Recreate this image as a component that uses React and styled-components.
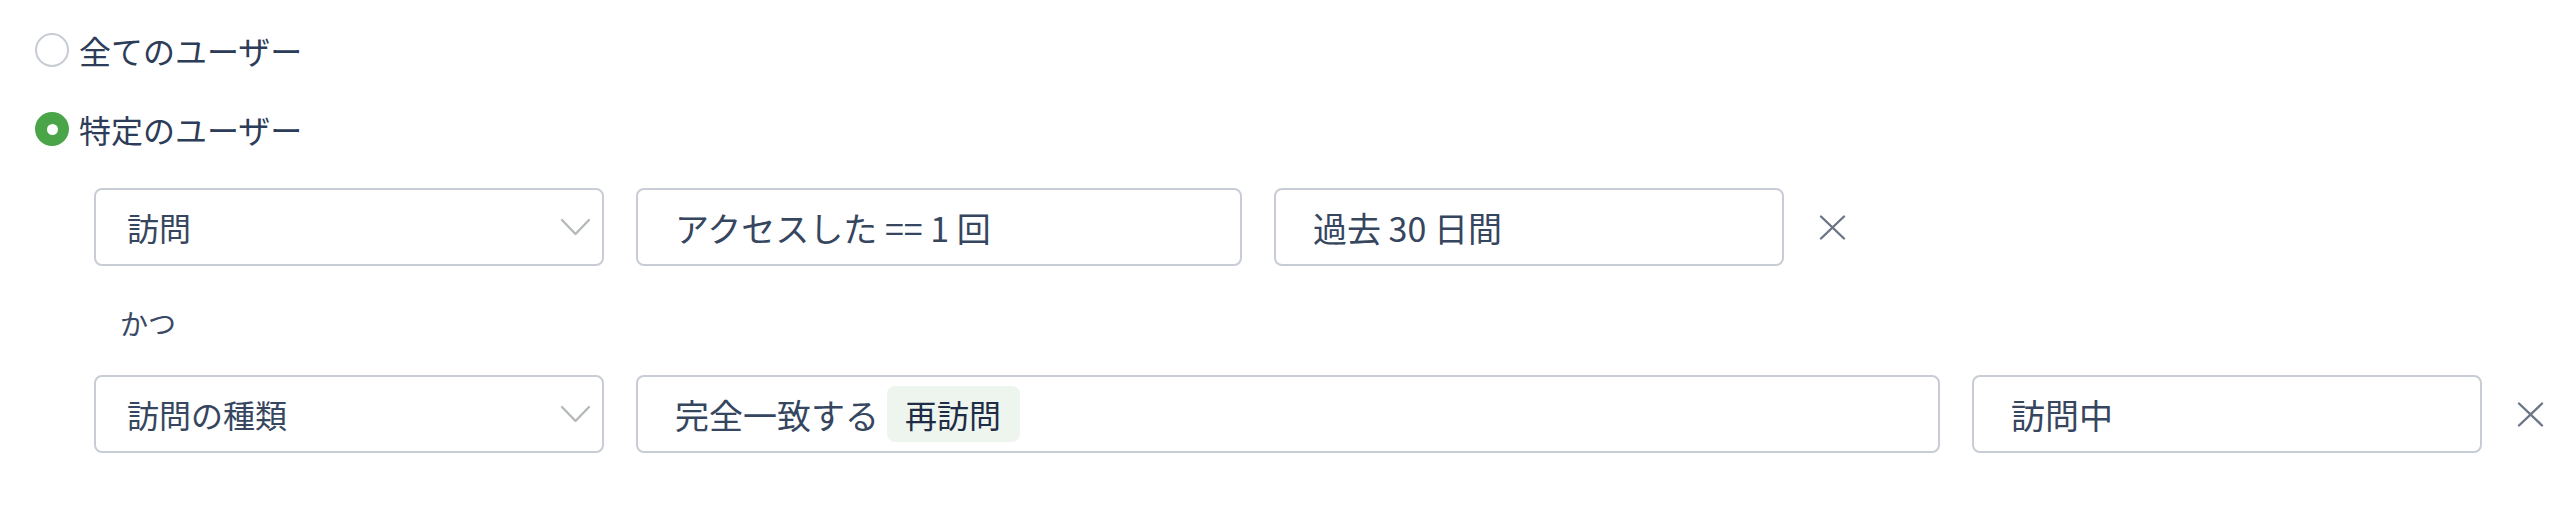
import React from "react";
import styled, { createGlobalStyle } from "styled-components";

const GlobalStyle = createGlobalStyle`
  html, body {
    margin: 0;
    padding: 0;
    background: #ffffff;
  }
  body {
    font-family: "Noto Sans CJK JP", "Noto Sans", sans-serif;
    color: #33425e;
  }
  * { box-sizing: border-box; }
`;

const Page = styled.div`
  padding: 30px 0 0 35px;
  width: 2568px;
  height: 506px;
`;

const RadioGroup = styled.div`
  display: flex;
  flex-direction: column;
  gap: 39px;
`;

const RadioOption = styled.label`
  display: flex;
  align-items: center;
  gap: 10px;
  height: 40px;
  font-size: 32px;
  color: #2d3c58;
  cursor: pointer;
`;

const RadioCircle = styled.span`
  width: 34px;
  height: 34px;
  border-radius: 50%;
  flex: none;
  display: flex;
  align-items: center;
  justify-content: center;
  border: ${(p) => (p.$checked ? "none" : "2px solid #c7ccd4")};
  background: ${(p) => (p.$checked ? "#4aa448" : "#ffffff")};

  &::after {
    content: "";
    display: ${(p) => (p.$checked ? "block" : "none")};
    width: 11px;
    height: 11px;
    border-radius: 50%;
    background: #ffffff;
  }
`;

const Conditions = styled.div`
  margin: 39px 0 0 59px;
  display: flex;
  flex-direction: column;
`;

const ConditionRow = styled.div`
  display: flex;
  align-items: center;
  gap: 32px;
`;

const Field = styled.div`
  height: 78px;
  width: ${(p) => p.$width}px;
  flex: none;
  border: 2px solid #c8cdd5;
  border-radius: 8px;
  background: #ffffff;
  display: flex;
  align-items: center;
  font-size: ${(p) => (p.$select ? 32 : 34)}px;
  color: #36465f;
  padding: 0 11px 0 ${(p) => (p.$select ? 31 : 37)}px;
  white-space: nowrap;
`;

const FieldText = styled.span`
  flex: 1;
  display: flex;
  align-items: center;
`;

const Chevron = styled.svg`
  width: 31px;
  height: 19px;
  flex: none;
`;

const Chip = styled.span`
  display: inline-flex;
  align-items: center;
  height: 56px;
  margin-left: 8px;
  padding: 0 19px 0 18px;
  border-radius: 8px;
  background: #eef5ef;
  color: #1f2c45;
  font-size: 32px;
`;

const RemoveButton = styled.button`
  border: none;
  background: none;
  padding: 0;
  margin-left: 3px;
  width: 27px;
  height: 27px;
  display: flex;
  align-items: center;
  justify-content: center;
  cursor: pointer;
`;

const Conjunction = styled.div`
  height: 40px;
  display: flex;
  align-items: center;
  margin: 37px 0 32px 26px;
  font-size: 28px;
  color: #3a4966;
`;

const ChevronIcon = () => (
  <Chevron viewBox="0 0 31 19" fill="none">
    <path d="M2 2 L15.5 16 L29 2" stroke="#b4bbb6" strokeWidth="2.4" strokeLinecap="round" strokeLinejoin="round" />
  </Chevron>
);

const CloseIcon = () => (
  <svg width="27" height="25" viewBox="0 0 27 25" fill="none">
    <path d="M2 1.5 L25 23.5 M25 1.5 L2 23.5" stroke="#6c7586" strokeWidth="2.4" strokeLinecap="round" />
  </svg>
);

const SelectField = ({ children }) => (
  <Field $width={510} $select>
    <FieldText>{children}</FieldText>
    <ChevronIcon />
  </Field>
);

const ValueField = ({ width, children }) => (
  <Field $width={width}>
    <FieldText>{children}</FieldText>
  </Field>
);

export default function App() {
  return (
    <>
      <GlobalStyle />
      <Page>
        <RadioGroup>
          <RadioOption>
            <RadioCircle />
            全てのユーザー
          </RadioOption>
          <RadioOption>
            <RadioCircle $checked />
            特定のユーザー
          </RadioOption>
        </RadioGroup>
        <Conditions>
          <ConditionRow>
            <SelectField>訪問</SelectField>
            <ValueField width={606}>アクセスした == 1 回</ValueField>
            <ValueField width={510}>過去 30 日間</ValueField>
            <RemoveButton aria-label="削除">
              <CloseIcon />
            </RemoveButton>
          </ConditionRow>
          <Conjunction>かつ</Conjunction>
          <ConditionRow>
            <SelectField>訪問の種類</SelectField>
            <ValueField width={1304}>
              完全一致する
              <Chip>再訪問</Chip>
            </ValueField>
            <ValueField width={510}>訪問中</ValueField>
            <RemoveButton aria-label="削除">
              <CloseIcon />
            </RemoveButton>
          </ConditionRow>
        </Conditions>
      </Page>
    </>
  );
}
